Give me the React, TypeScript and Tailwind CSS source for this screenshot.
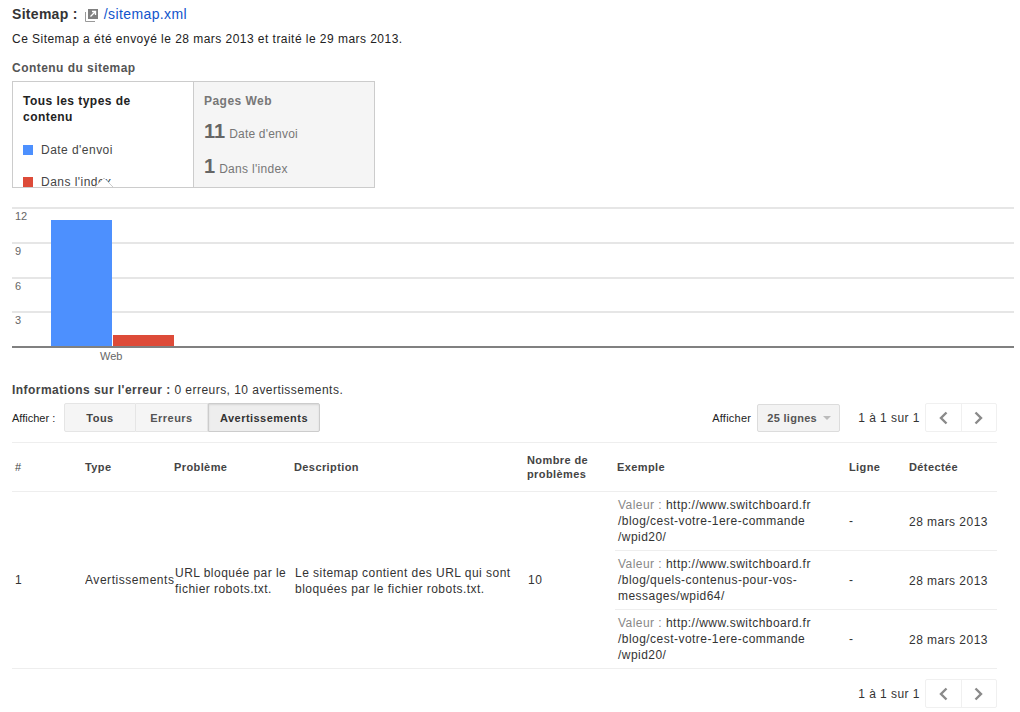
const font = "[font-family:'Liberation_Sans',Arial,sans-serif]";

const Pager = () => (
  <div className="flex items-center">
    <span className="mr-[5px] text-[12px] tracking-[0.46px] text-[#333]">1 à 1 sur 1</span>
    <div className="flex h-[29px] w-[72px] rounded-[2px] border border-[#f0f0f0]">
      <div className="flex flex-1 items-center justify-center border-r border-[#f0f0f0]">
        <svg width="11" height="14" viewBox="0 0 11 14">
          <path d="M8.5 1.5 L3 7 L8.5 12.5" fill="none" stroke="#8a8a8a" strokeWidth="2.4" />
        </svg>
      </div>
      <div className="flex flex-1 items-center justify-center">
        <svg width="11" height="14" viewBox="0 0 11 14">
          <path d="M2.5 1.5 L8 7 L2.5 12.5" fill="none" stroke="#8a8a8a" strokeWidth="2.4" />
        </svg>
      </div>
    </div>
  </div>
);

const Chart = () => (
  <svg width="1002" height="160" className="block">
    <rect x="0" y="0" width="1002" height="2" fill="#e6e6e6" />
    <rect x="0" y="35" width="1002" height="2" fill="#e6e6e6" />
    <rect x="0" y="70" width="1002" height="2" fill="#e6e6e6" />
    <rect x="0" y="104" width="1002" height="2" fill="#e6e6e6" />
    <rect x="39" y="13" width="61" height="126" fill="#4d90fe" />
    <rect x="101" y="128" width="61" height="11" fill="#dd4b39" />
    <rect x="0" y="139" width="1002" height="2" fill="#808080" />
    <g fontSize="11" fill="#666" fontFamily="'Liberation Sans', Arial, sans-serif">
      <text x="3" y="13">12</text>
      <text x="3" y="48">9</text>
      <text x="3" y="83">6</text>
      <text x="3" y="117">3</text>
      <text x="88" y="153">Web</text>
    </g>
  </svg>
);

const rows = [
  { a: "/blog/cest-votre-1ere-commande", b: "/wpid20/" },
  { a: "/blog/quels-contenus-pour-vos-", b: "messages/wpid64/" },
  { a: "/blog/cest-votre-1ere-commande", b: "/wpid20/" },
];

const th = "text-left text-[11px] font-bold tracking-[0.4px] text-[#444] align-middle leading-[14px]";
const td = "text-[12px] tracking-[0.46px] text-[#333] align-middle leading-[16px]";

export default function App() {
  return (
    <div className={`${font} h-[712px] w-[1020px] overflow-hidden bg-white pl-[12px] text-[#333]`}>
      <div className="flex h-[28px] items-center pt-[1px]">
        <span className="text-[14px] font-bold tracking-[0.3px] text-[#333]">Sitemap :</span>
        <svg width="13" height="13" viewBox="0 0 13 13" className="ml-[7px] mr-[6px] mt-[1px]">
          <rect x="3" y="0" width="10" height="10" fill="#808080" />
          <path d="M0.5 3 V12.5 H10" fill="none" stroke="#999" />
          <path d="M5.5 7.5 L10.5 2.5 M7 2.5 H10.5 V6" stroke="#fff" strokeWidth="1.3" fill="none" />
        </svg>
        <span className="text-[14px] tracking-[0.4px] text-[#1155cc]">/sitemap.xml</span>
      </div>
      <p className="mt-[3px] h-[16px] text-[12px] leading-[16px] tracking-[0.46px] text-[#222]">
        Ce Sitemap a été envoyé le 28 mars 2013 et traité le 29 mars 2013.
      </p>
      <h3 className="mt-[13px] h-[16px] text-[12px] font-bold leading-[16px] tracking-[0.46px] text-[#555]">
        Contenu du sitemap
      </h3>

      <div className="mt-[5px] flex h-[107px] w-[363px] border border-[#ccc]">
        <div className="relative w-[181px] overflow-hidden border-r border-[#ccc] bg-white pl-[10px] pt-[11px]">
          <div className="text-[12px] font-bold leading-[16px] tracking-[0.46px] text-[#222]">
            Tous les types de
            <br />
            contenu
          </div>
          <div className="mt-[17px] flex items-center text-[12px] leading-[16px] tracking-[0.46px] text-[#444]">
            <span className="mr-[8px] h-[10px] w-[10px] bg-[#4d90fe]" />
            Date d'envoi
          </div>
          <div className="mt-[16px] flex items-center text-[12px] leading-[16px] tracking-[0.46px] text-[#444]">
            <span className="mr-[8px] h-[10px] w-[10px] bg-[#dd4b39]" />
            Dans l'index
          </div>
          <svg width="20" height="10" viewBox="0 0 20 10" className="absolute bottom-0 left-[82px]">
            <path d="M0 10 L9 1 L18 10 Z" fill="#fff" />
            <path d="M0 10 L9 1 L18 10" fill="none" stroke="#ccc" />
          </svg>
        </div>
        <div className="flex-1 bg-[#f5f5f5] pl-[10px] pt-[11px] text-[#777]">
          <div className="text-[12px] font-bold leading-[16px] tracking-[0.46px]">Pages Web</div>
          <div className="mt-[7px] flex h-[24px] items-baseline">
            <span className="mr-[4px] text-[20px] font-bold text-[#666]">11</span>
            <span className="text-[12px] tracking-[0.2px]">Date d'envoi</span>
          </div>
          <div className="mt-[11px] flex h-[24px] items-baseline">
            <span className="mr-[4px] text-[20px] font-bold text-[#666]">1</span>
            <span className="text-[12px] tracking-[0.3px]">Dans l'index</span>
          </div>
        </div>
      </div>

      <div className="mt-[19px]">
        <Chart />
      </div>

      <p className="mt-[15px] h-[16px] text-[12px] leading-[16px] tracking-[0.46px] text-[#333]">
        <b className="text-[#444]">Informations sur l'erreur :</b> 0 erreurs, 10 avertissements.
      </p>

      <div className="mt-[5px] flex h-[29px] w-[985px] items-center justify-between">
        <div className="flex items-center">
          <span className="w-[52px] pt-[1px] text-[11px] text-[#222]">Afficher :</span>
          <div className="flex h-[29px] text-[11px] font-bold tracking-[0.46px] text-[#444]">
            <div className="flex w-[72px] items-center justify-center rounded-l-[2px] border border-[#e5e5e5] bg-[#f5f5f5] pt-[1px]">Tous</div>
            <div className="flex w-[72px] items-center justify-center border-y border-r border-[#e5e5e5] bg-[#f5f5f5] pt-[1px] text-[#555]">Erreurs</div>
            <div className="flex w-[112px] items-center justify-center rounded-r-[2px] border border-[#ccc] bg-[#eeeeee] pt-[1px] text-[#333] shadow-[inset_0_1px_2px_rgba(0,0,0,0.1)]">Avertissements</div>
          </div>
        </div>
        <div className="flex items-center">
          <span className="mr-[6px] pt-[1px] text-[11px] tracking-[0.25px] text-[#222]">Afficher</span>
          <div className="mr-[18px] flex h-[28px] w-[83px] items-center rounded-[2px] border border-[#dcdcdc] bg-[#f3f3f3] pl-[9px] pt-[1px] text-[11px] font-bold tracking-[0.3px] text-[#555]">
            25 lignes
            <span className="ml-[6px] h-0 w-0 border-x-[4px] border-t-[4px] border-x-transparent border-t-[#bbb]" />
          </div>
          <Pager />
        </div>
      </div>

      <table className="mt-[10px] w-[985px] table-fixed border-collapse">
        <colgroup>
          <col className="w-[72px]" />
          <col className="w-[90px]" />
          <col className="w-[120px]" />
          <col className="w-[233px]" />
          <col className="w-[88px]" />
          <col className="w-[234px]" />
          <col className="w-[60px]" />
          <col className="w-[88px]" />
        </colgroup>
        <thead>
          <tr className="h-[49px] border-y border-[#eeeeee]">
            <th className={`${th} pl-[3px] font-normal`}>#</th>
            <th className={`${th} pl-[1px]`}>Type</th>
            <th className={th}>Problème</th>
            <th className={th}>Description</th>
            <th className={th}>Nombre de problèmes</th>
            <th className={`${th} pl-[2px]`}>Exemple</th>
            <th className={th}>Ligne</th>
            <th className={th}>Détectée</th>
          </tr>
        </thead>
        <tbody>
          {rows.map((row, i) => (
            <tr key={i} className="h-[59px] border-b border-[#eeeeee]">
              {i === 0 && (
                <>
                  <td rowSpan={3} className={`${td} border-b border-[#eeeeee] pl-[3px]`}>1</td>
                  <td rowSpan={3} className={`${td} border-b border-[#eeeeee] pl-[1px] tracking-[0.55px]`}>
                    <div className="overflow-hidden whitespace-nowrap">Avertissements</div>
                  </td>
                  <td rowSpan={3} className={`${td} border-b border-[#eeeeee] pl-[1px] pt-[2px]`}>URL bloquée par le fichier robots.txt.</td>
                  <td rowSpan={3} className={`${td} border-b border-[#eeeeee] pl-[1px] pt-[2px]`}>Le sitemap contient des URL qui sont bloquées par le fichier robots.txt.</td>
                  <td rowSpan={3} className={`${td} border-b border-[#eeeeee] pl-[1px]`}>10</td>
                </>
              )}
              <td className={`${td} pl-[3px]`}>
                <span className="text-[#888]">Valeur : </span>http://www.switchboard.fr
                <br />
                {row.a}
                <br />
                {row.b}
              </td>
              <td className={td}>-</td>
              <td className={`${td} whitespace-nowrap pt-[2px] tracking-[0.6px]`}>28 mars 2013</td>
            </tr>
          ))}
        </tbody>
      </table>

      <div className="mt-[10px] flex w-[985px] justify-end">
        <Pager />
      </div>
    </div>
  );
}
